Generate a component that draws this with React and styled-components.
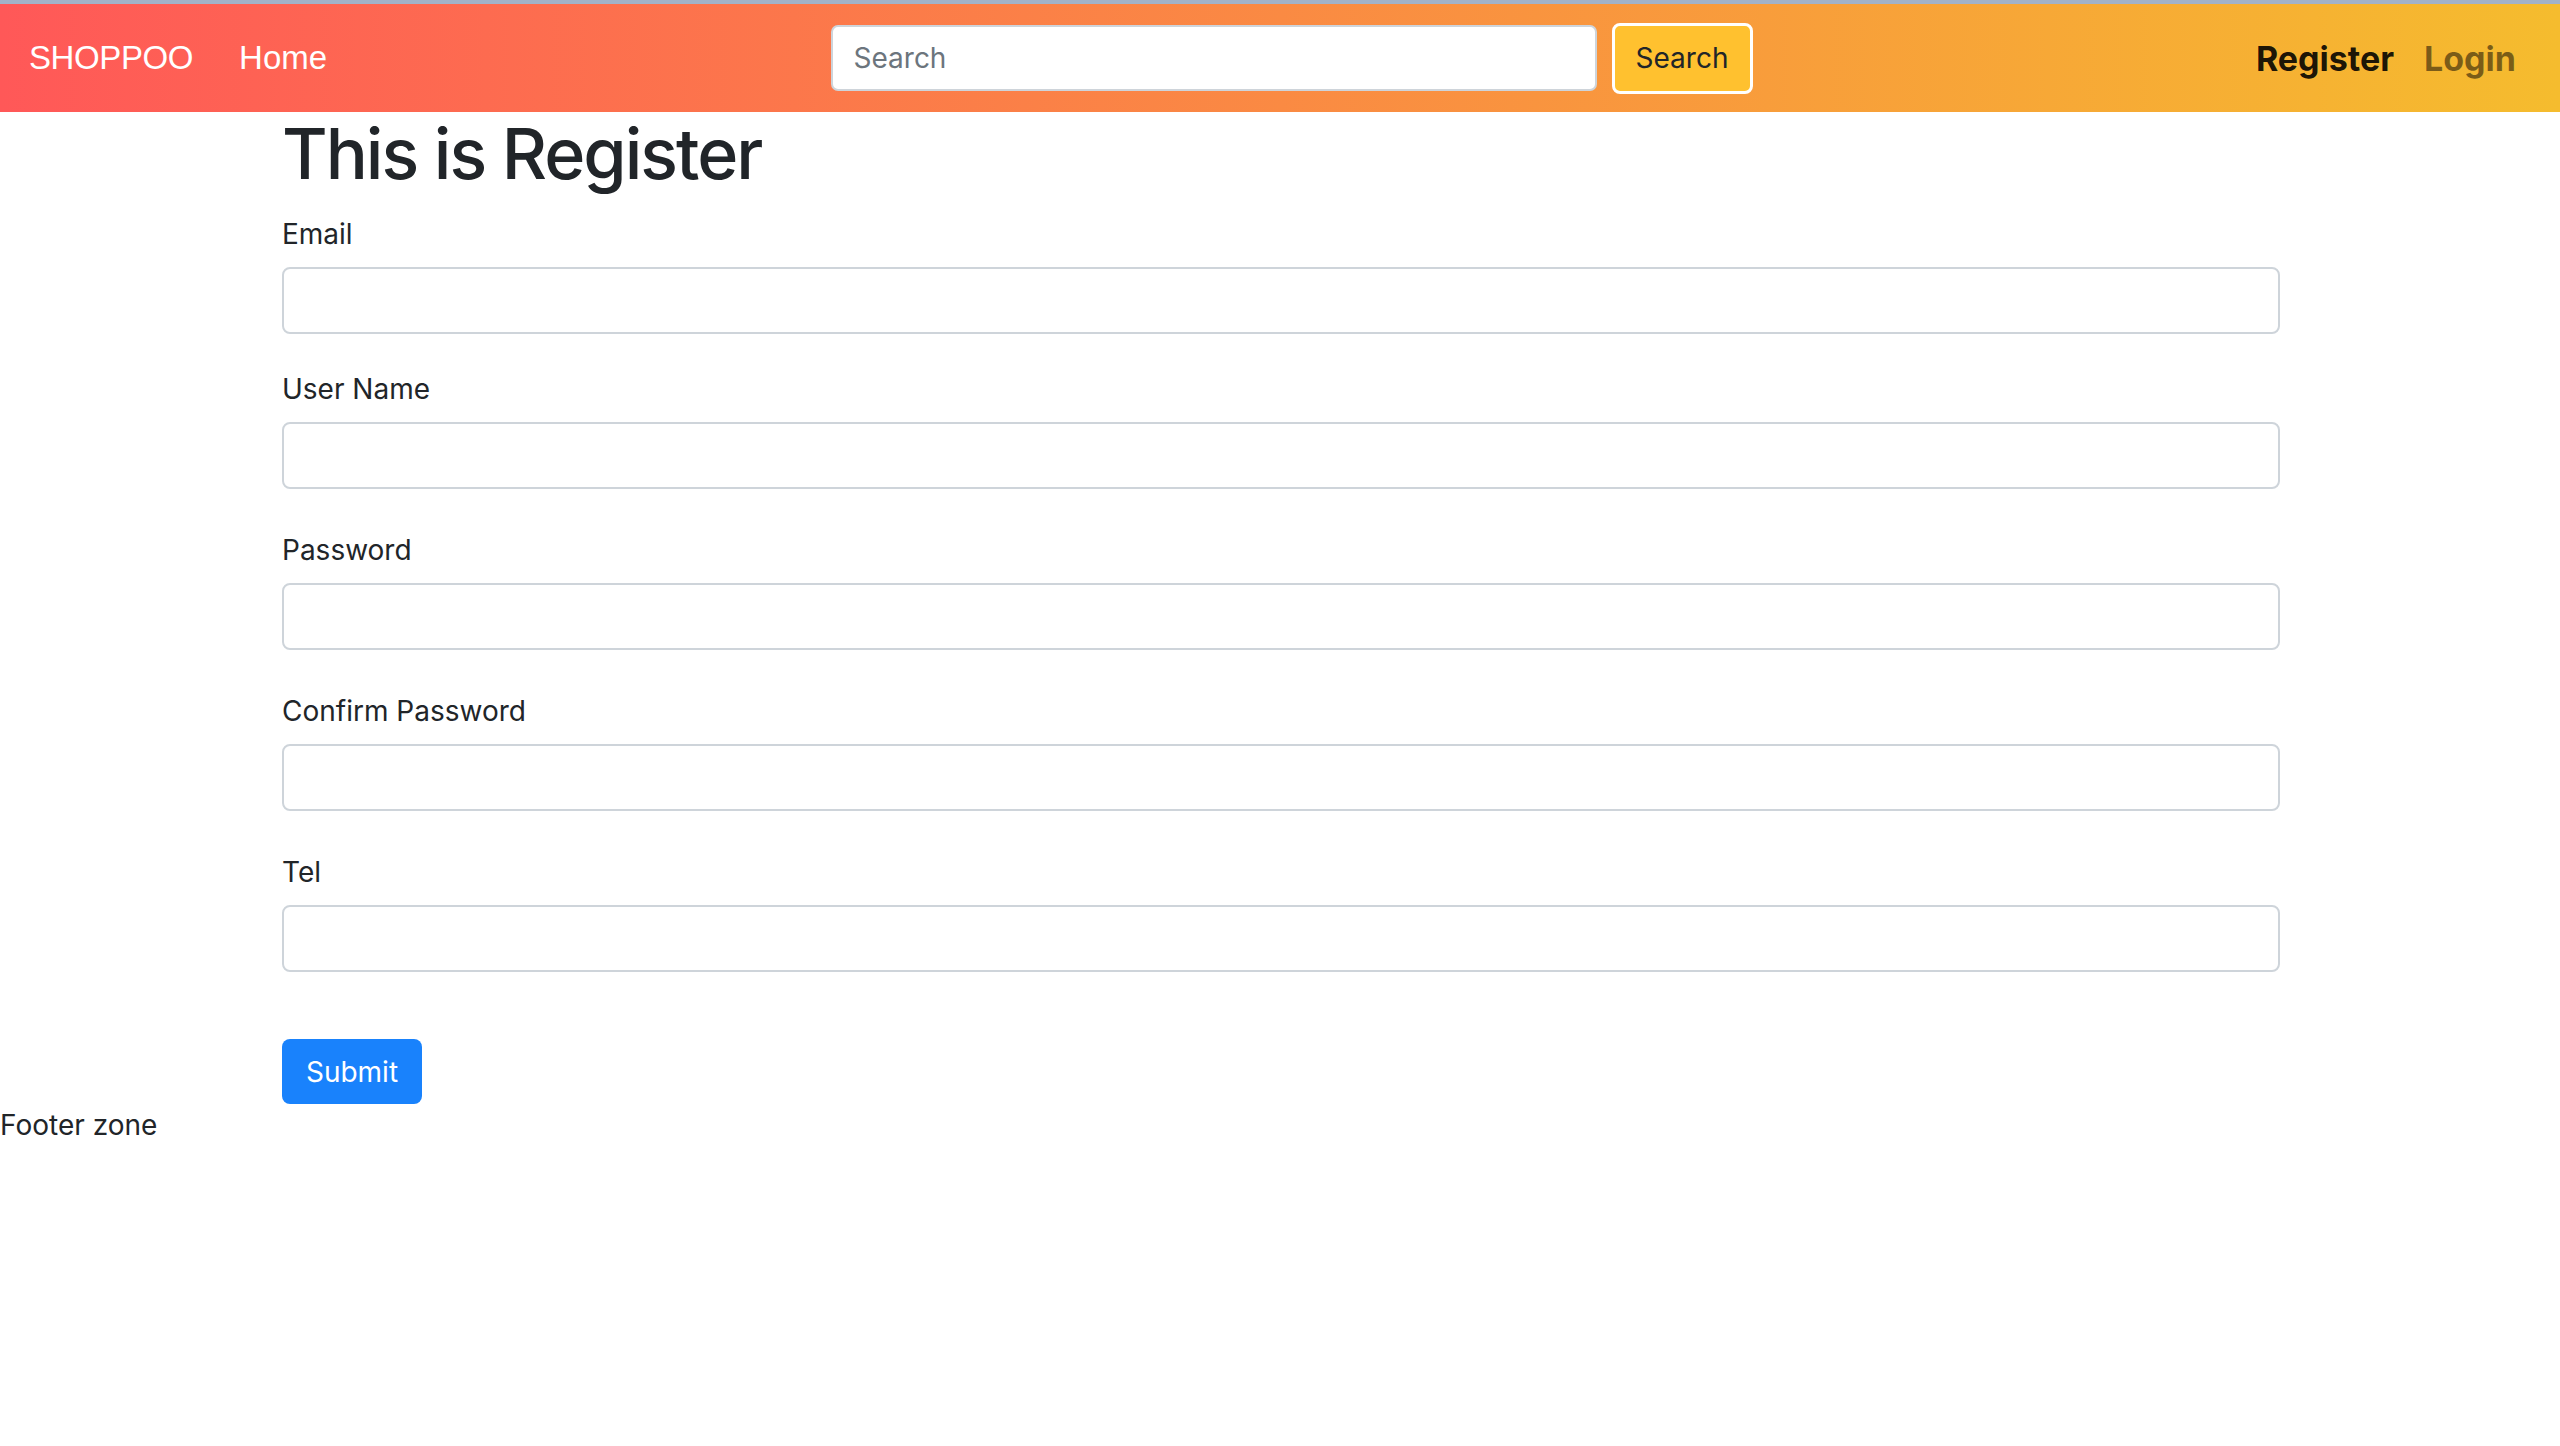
import React from 'react'
import styled, { createGlobalStyle } from 'styled-components'

const GlobalStyle = createGlobalStyle`
  body {
    margin: 0;
    background: #fff;
    color: #212529;
    font-family: Inter, "Noto Sans", sans-serif;
  }
  * {
    box-sizing: border-box;
  }
`

const TopLine = styled.div`
  height: 4px;
  background: #a2b2c8;
`

const Navbar = styled.nav`
  height: 108px;
  display: flex;
  align-items: center;
  padding: 0 44px 0 29px;
  background: linear-gradient(to right, #ff5858, #f5bc2e);
`

const Brand = styled.a`
  font-family: "Liberation Sans", Arial, sans-serif;
  font-size: 33px;
  letter-spacing: -0.4px;
  color: #fff;
  text-decoration: none;
  margin-right: 46px;
`

const HomeLink = styled.a`
  font-family: "Liberation Sans", Arial, sans-serif;
  font-size: 33px;
  color: #fff;
  text-decoration: none;
`

const SearchForm = styled.form`
  margin: 0 auto;
  display: flex;
  align-items: center;
  gap: 15px;
`

const SearchInput = styled.input`
  width: 766px;
  height: 66px;
  padding: 0 21px;
  border: 2px solid #ced4da;
  border-radius: 7px;
  font-family: Inter, sans-serif;
  font-size: 28px;
  color: #495057;
  background: #fff;

  &::placeholder {
    color: #6c757d;
  }
`

const SearchButton = styled.button`
  width: 141px;
  height: 71px;
  background: #ffc12f;
  border: 3px solid #fff;
  border-radius: 8px;
  font-family: Inter, sans-serif;
  font-size: 28px;
  color: #212529;
  padding: 0;
`

const RightLinks = styled.div`
  display: flex;
  align-items: center;
  gap: 30px;
`

const NavLink = styled.a`
  font-size: 34px;
  font-weight: 700;
  text-decoration: none;
  color: ${(p) => (p.active ? 'rgba(0, 0, 0, 0.9)' : 'rgba(0, 0, 0, 0.5)')};
`

const Main = styled.main`
  padding-left: 282px;
  width: 2280px;
`

const Title = styled.h1`
  margin: 0 0 17px;
  font-size: 70px;
  font-weight: 500;
  line-height: 84px;
  letter-spacing: -2px;
  color: #212529;
`

const FormGroup = styled.div`
  margin-bottom: 40px;

  &:first-child {
    margin-bottom: 34px;
  }
`

const Label = styled.label`
  display: block;
  font-size: 28px;
  line-height: 42px;
  margin-bottom: 12px;
`

const Field = styled.input`
  display: block;
  width: 100%;
  height: 67px;
  padding: 0 21px;
  border: 2px solid #ced4da;
  border-radius: 8px;
  font-family: Inter, sans-serif;
  font-size: 28px;
  background: #fff;
`

const SubmitButton = styled.button`
  margin-top: 27px;
  width: 140px;
  height: 65px;
  border: none;
  border-radius: 8px;
  background: #1982fc;
  color: #fff;
  font-family: Inter, sans-serif;
  font-size: 28px;
  padding: 0;
`

const Footer = styled.footer`
  font-size: 28px;
  line-height: 42px;
`

const fields = [
  { label: 'Email', type: 'email' },
  { label: 'User Name', type: 'text' },
  { label: 'Password', type: 'password' },
  { label: 'Confirm Password', type: 'password' },
  { label: 'Tel', type: 'tel' },
]

export default function App() {
  return (
    <>
      <GlobalStyle />
      <TopLine />
      <Navbar>
        <Brand href="#">SHOPPOO</Brand>
        <HomeLink href="#">Home</HomeLink>
        <SearchForm onSubmit={(e) => e.preventDefault()}>
          <SearchInput placeholder="Search" />
          <SearchButton type="submit">Search</SearchButton>
        </SearchForm>
        <RightLinks>
          <NavLink href="#" active>Register</NavLink>
          <NavLink href="#">Login</NavLink>
        </RightLinks>
      </Navbar>
      <Main>
        <Title>This is Register</Title>
        <form onSubmit={(e) => e.preventDefault()}>
          {fields.map((f) => (
            <FormGroup key={f.label}>
              <Label>{f.label}</Label>
              <Field type={f.type} />
            </FormGroup>
          ))}
          <SubmitButton type="submit">Submit</SubmitButton>
        </form>
      </Main>
      <Footer>Footer zone</Footer>
    </>
  )
}
